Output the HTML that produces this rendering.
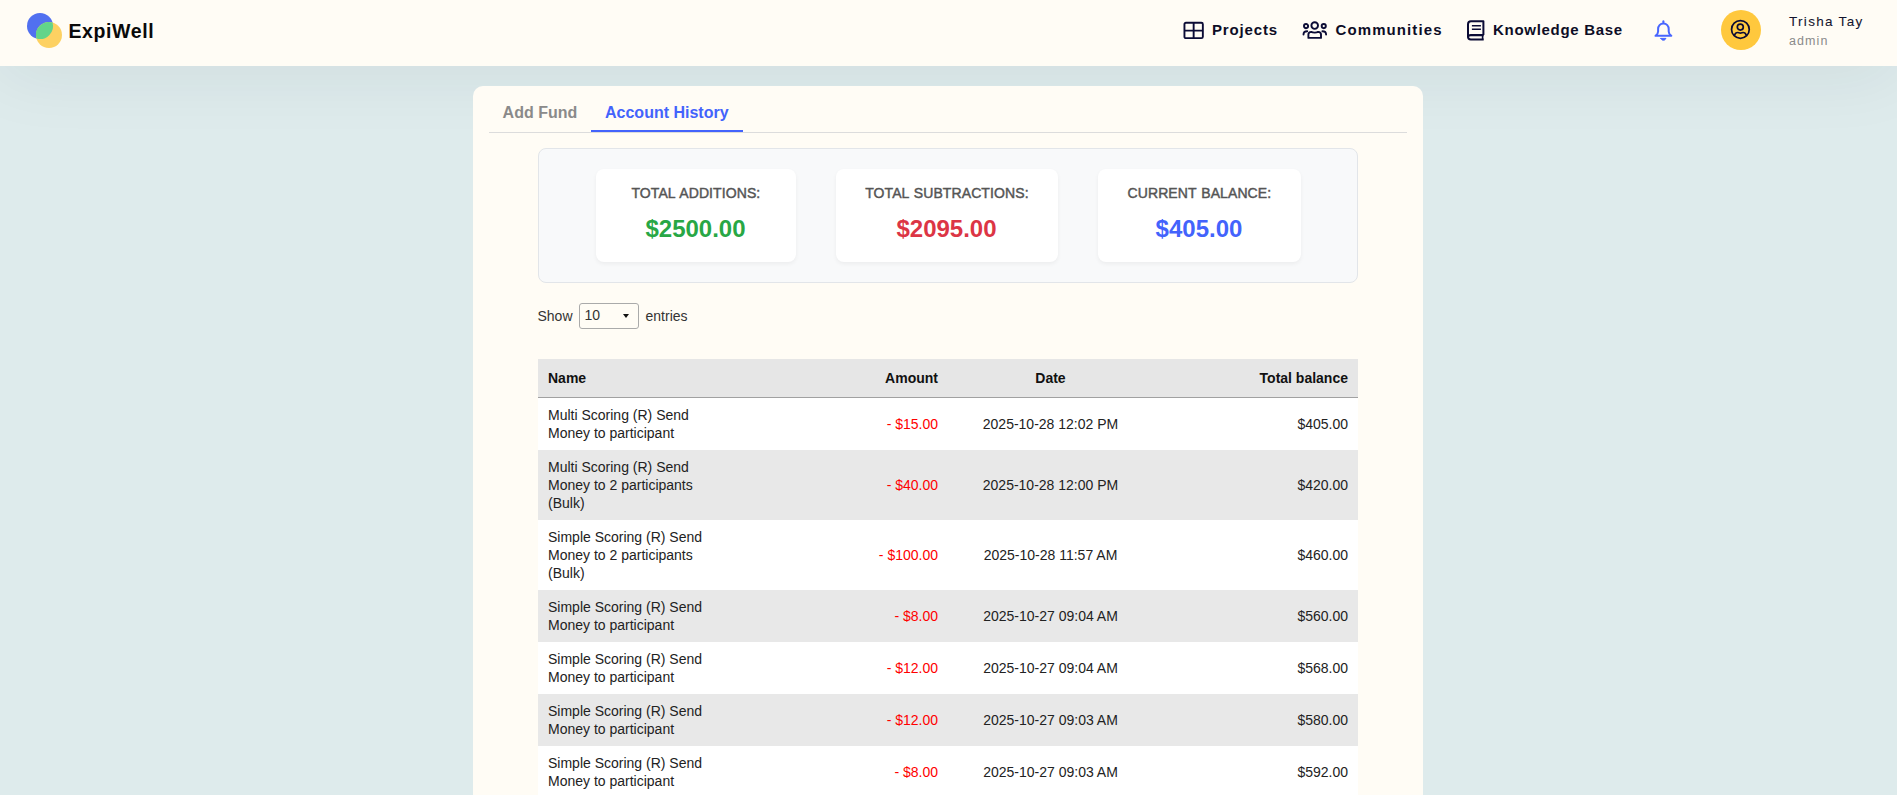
<!DOCTYPE html>
<html lang="en">
<head>
<meta charset="utf-8">
<title>ExpiWell - Account History</title>
<style>
*{box-sizing:border-box;margin:0;padding:0}
html,body{width:1897px;height:795px;overflow:hidden}
body{font-family:"Liberation Sans",Arial,sans-serif;background:#deebec;position:relative;color:#212529}
.topbar{position:absolute;left:0;top:0;width:1897px;height:66px;background:#fffcf5;box-shadow:0 6px 70px rgba(20,40,50,.08);z-index:1}
.abs{position:absolute}
.logo-text{left:68.4px;top:18.7px;font-size:19.5px;line-height:24px;font-weight:700;color:#0a0a0a;letter-spacing:.62px;white-space:nowrap}
.nav-t{font-weight:700;font-size:15px;line-height:20px;color:#0d0d26;white-space:nowrap;top:20.4px}
.uname{left:1789px;top:13.2px;font-size:13.5px;line-height:18px;color:#14142e;-webkit-text-stroke:.08px #14142e;letter-spacing:1.3px;white-space:nowrap}
.urole{left:1789px;top:32.9px;font-size:12.5px;line-height:16px;color:#8a8a8a;letter-spacing:1.1px;white-space:nowrap}
.avatar{left:1721px;top:10px;width:40px;height:40px;border-radius:50%;background:#ffc83d}
.panel{z-index:2;position:absolute;left:473px;top:86px;width:950px;height:760px;background:#fffcf5;border-radius:10px}
.tabline{left:16px;top:46px;width:918px;height:1px;background:#dcdcdc}
.tab{font-weight:700;font-size:16px;line-height:20px;top:17px;white-space:nowrap}
.tab1{left:29.6px;color:#8a8a8a}
.tab2{left:132px;color:#4363fc}
.tabul{left:118px;top:44px;width:152px;height:2px;background:#4363fc}
.summary{left:65px;top:62px;width:820px;height:135px;border:1px solid #e2e5e9;border-radius:8px;background:#f8f9fa;display:flex;justify-content:center;align-items:flex-start;gap:40px;padding:20px 0}
.scard{background:#fff;border-radius:8px;padding:15px 0;width:200px;flex:none;text-align:center;line-height:1.5;box-shadow:0 2px 4px rgba(0,0,0,.05);height:93px}
.scard .l{font-size:14px;line-height:19.5px;font-weight:400;color:#555;-webkit-text-stroke:.45px #555;letter-spacing:.1px;word-spacing:.8px;position:relative;left:.4px;text-transform:uppercase;margin-bottom:7.5px;white-space:nowrap}
.scard .v{font-size:24px;font-weight:700;white-space:nowrap}
.g{color:#28a745}.r{color:#dc3545}.b{color:#4363fc}
.len{left:64.5px;top:217px;height:26px;font-size:14px;color:#333;display:flex;align-items:center;white-space:nowrap}
.sel{display:inline-block;position:relative;width:60px;height:26px;border:1px solid #aaa;border-radius:3px;margin:0 7px 0 6px;font-size:14px;line-height:23px;padding-left:5px;color:#333}
.sel:after{content:"";position:absolute;right:9px;top:10px;border-left:3.5px solid transparent;border-right:3.5px solid transparent;border-top:4px solid #111}
table{position:absolute;left:65px;top:273px;width:820px;border-collapse:separate;border-spacing:0;table-layout:fixed;font-size:14px;line-height:18px;color:#222}
th{background:#e6e6e6;font-weight:700;color:#111;padding:10px;border-bottom:1px solid #a1a1a1;height:39px}
td{padding:8px 10px;vertical-align:middle}
tr.o td{background:#fff}
tr.e td{background:#e8e8e8}
.c1{text-align:left}.c2{text-align:right}.c3{text-align:center}.c4{text-align:right}
td.c2{color:#f00}
</style>
</head>
<body>
<div class="topbar">
  <svg class="abs" style="left:26px;top:12px" width="38" height="38" viewBox="0 0 38 38">
    <circle cx="14" cy="14" r="13" fill="#5170f0"/>
    <circle cx="23" cy="23" r="13" fill="#fdd162"/>
    <path d="M26.52 10.48A13 13 0 0 0 10.48 26.52A13 13 0 0 0 26.52 10.48Z" fill="#62d48a"/>
  </svg>
  <div class="abs logo-text">ExpiWell</div>

  <svg class="abs" style="left:1183px;top:21px" width="22" height="20" viewBox="0 0 22 20" fill="none" stroke="#0b0b35" stroke-width="1.9">
    <rect x="1.45" y="1.75" width="18.4" height="15.4" rx="1.5"/>
    <path d="M10.65 1.8v15.300M1.5 9.600h18.300"/>
  </svg>
  <div class="abs nav-t" style="left:1212px;letter-spacing:.85px">Projects</div>

  <svg class="abs" style="left:1302px;top:21px" width="26" height="19" viewBox="0 0 26 19" fill="none" stroke="#0b0b35" stroke-width="1.9" stroke-linecap="round">
    <circle cx="12.7" cy="4.6" r="3.3"/>
    <path d="M6.4 16.9V13.6C6.4 11.700 7.700 10.900 9.300 10.900C10.800 11.800 14.600 11.800 16.100 10.900C17.700 10.900 19 11.700 19 13.600V16.900Z" stroke-linejoin="round"/>
    <circle cx="4.050" cy="5.100" r="2.100"/>
    <circle cx="21.750" cy="5.100" r="2.100"/>
    <path d="M1.500 13.600C1.500 11.600 2.900 10.300 5.200 10.300M24.100 13.600C24.100 11.600 22.700 10.300 20.400 10.300"/>
  </svg>
  <div class="abs nav-t" style="left:1335.5px;letter-spacing:1.1px">Communities</div>

  <svg class="abs" style="left:1466px;top:19px" width="20" height="23" viewBox="0 0 20 23" fill="none" stroke="#0b0b35" stroke-width="2" stroke-linejoin="round">
    <path d="M17.400 16.100V2.300H5C3.300 2.300 2 3.600 2 5.300V17.800C2 19.300 3.200 20.400 4.800 20.400H17.700"/>
    <path d="M17.700 16.100H4.800C3.200 16.100 2 17 2 18.200" stroke-width="2.100"/>
    <path d="M16.600 16.100V20.400" stroke-width="1.600"/>
    <path d="M5.900 6.850h9M5.900 10.150h9" stroke-width="1.500"/>
  </svg>
  <div class="abs nav-t" style="left:1493px;letter-spacing:.7px">Knowledge Base</div>

  <svg class="abs" style="left:1654px;top:19px" width="20" height="23" viewBox="0 0 20 23" fill="none" stroke="#4866ff" stroke-width="2" stroke-linejoin="round" stroke-linecap="round">
    <path d="M9.400 2.300V4"/>
    <path d="M9.400 4.600C6.200 4.600 4.100 7 4.100 10V12.400C4.100 14.200 3.200 15.600 1.500 16.800H17.300C15.600 15.600 14.700 14.200 14.700 12.400V10C14.700 7 12.600 4.600 9.400 4.600Z"/>
    <path d="M6.900 19.400H11.900C11.400 20.600 10.500 21.200 9.400 21.200C8.300 21.200 7.400 20.600 6.900 19.400Z" fill="#4866ff" stroke-width="1"/>
  </svg>

  <div class="abs avatar"></div>
  <svg class="abs" style="left:1730px;top:19px" width="21" height="21" viewBox="0 0 21 21" fill="none" stroke="#0b0b35" stroke-width="1.700" stroke-linecap="round">
    <circle cx="10.400" cy="10.450" r="8.850"/>
    <circle cx="10.300" cy="8.100" r="3"/>
    <path d="M4.600 16C5.200 14.300 6.400 13.500 7.600 13.500C8.600 13.500 9.200 14.100 10.400 14.100C11.600 14.100 12.200 13.500 13.200 13.500C14.400 13.500 15.600 14.300 16.200 16"/>
  </svg>
  <div class="abs uname">Trisha Tay</div>
  <div class="abs urole">admin</div>
</div>

<div class="panel">
  <div class="abs tabline"></div>
  <div class="abs tab tab1">Add Fund</div>
  <div class="abs tab tab2">Account History</div>
  <div class="abs tabul"></div>

  <div class="abs summary">
    <div class="scard"><div class="l">Total Additions:</div><div class="v g">$2500.00</div></div>
    <div class="scard" style="width:222px"><div class="l">Total Subtractions:</div><div class="v r">$2095.00</div></div>
    <div class="scard" style="width:203px"><div class="l">Current Balance:</div><div class="v b">$405.00</div></div>
  </div>

  <div class="abs len">Show <span class="sel">10</span> entries</div>

  <table>
    <thead><tr><th class="c1">Name</th><th class="c2">Amount</th><th class="c3">Date</th><th class="c4">Total balance</th></tr></thead>
    <tbody>
      <tr class="o"><td class="c1">Multi Scoring (R) Send Money to participant</td><td class="c2">- $15.00</td><td class="c3">2025-10-28 12:02 PM</td><td class="c4">$405.00</td></tr>
      <tr class="e"><td class="c1">Multi Scoring (R) Send Money to 2 participants (Bulk)</td><td class="c2">- $40.00</td><td class="c3">2025-10-28 12:00 PM</td><td class="c4">$420.00</td></tr>
      <tr class="o"><td class="c1">Simple Scoring (R) Send Money to 2 participants (Bulk)</td><td class="c2">- $100.00</td><td class="c3">2025-10-28 11:57 AM</td><td class="c4">$460.00</td></tr>
      <tr class="e"><td class="c1">Simple Scoring (R) Send Money to participant</td><td class="c2">- $8.00</td><td class="c3">2025-10-27 09:04 AM</td><td class="c4">$560.00</td></tr>
      <tr class="o"><td class="c1">Simple Scoring (R) Send Money to participant</td><td class="c2">- $12.00</td><td class="c3">2025-10-27 09:04 AM</td><td class="c4">$568.00</td></tr>
      <tr class="e"><td class="c1">Simple Scoring (R) Send Money to participant</td><td class="c2">- $12.00</td><td class="c3">2025-10-27 09:03 AM</td><td class="c4">$580.00</td></tr>
      <tr class="o"><td class="c1">Simple Scoring (R) Send Money to participant</td><td class="c2">- $8.00</td><td class="c3">2025-10-27 09:03 AM</td><td class="c4">$592.00</td></tr>
      <tr class="e"><td class="c1">Simple Scoring (R) Send Money to participant</td><td class="c2">- $10.00</td><td class="c3">2025-10-27 09:02 AM</td><td class="c4">$600.00</td></tr>
    </tbody>
  </table>
</div>
</body>
</html>
